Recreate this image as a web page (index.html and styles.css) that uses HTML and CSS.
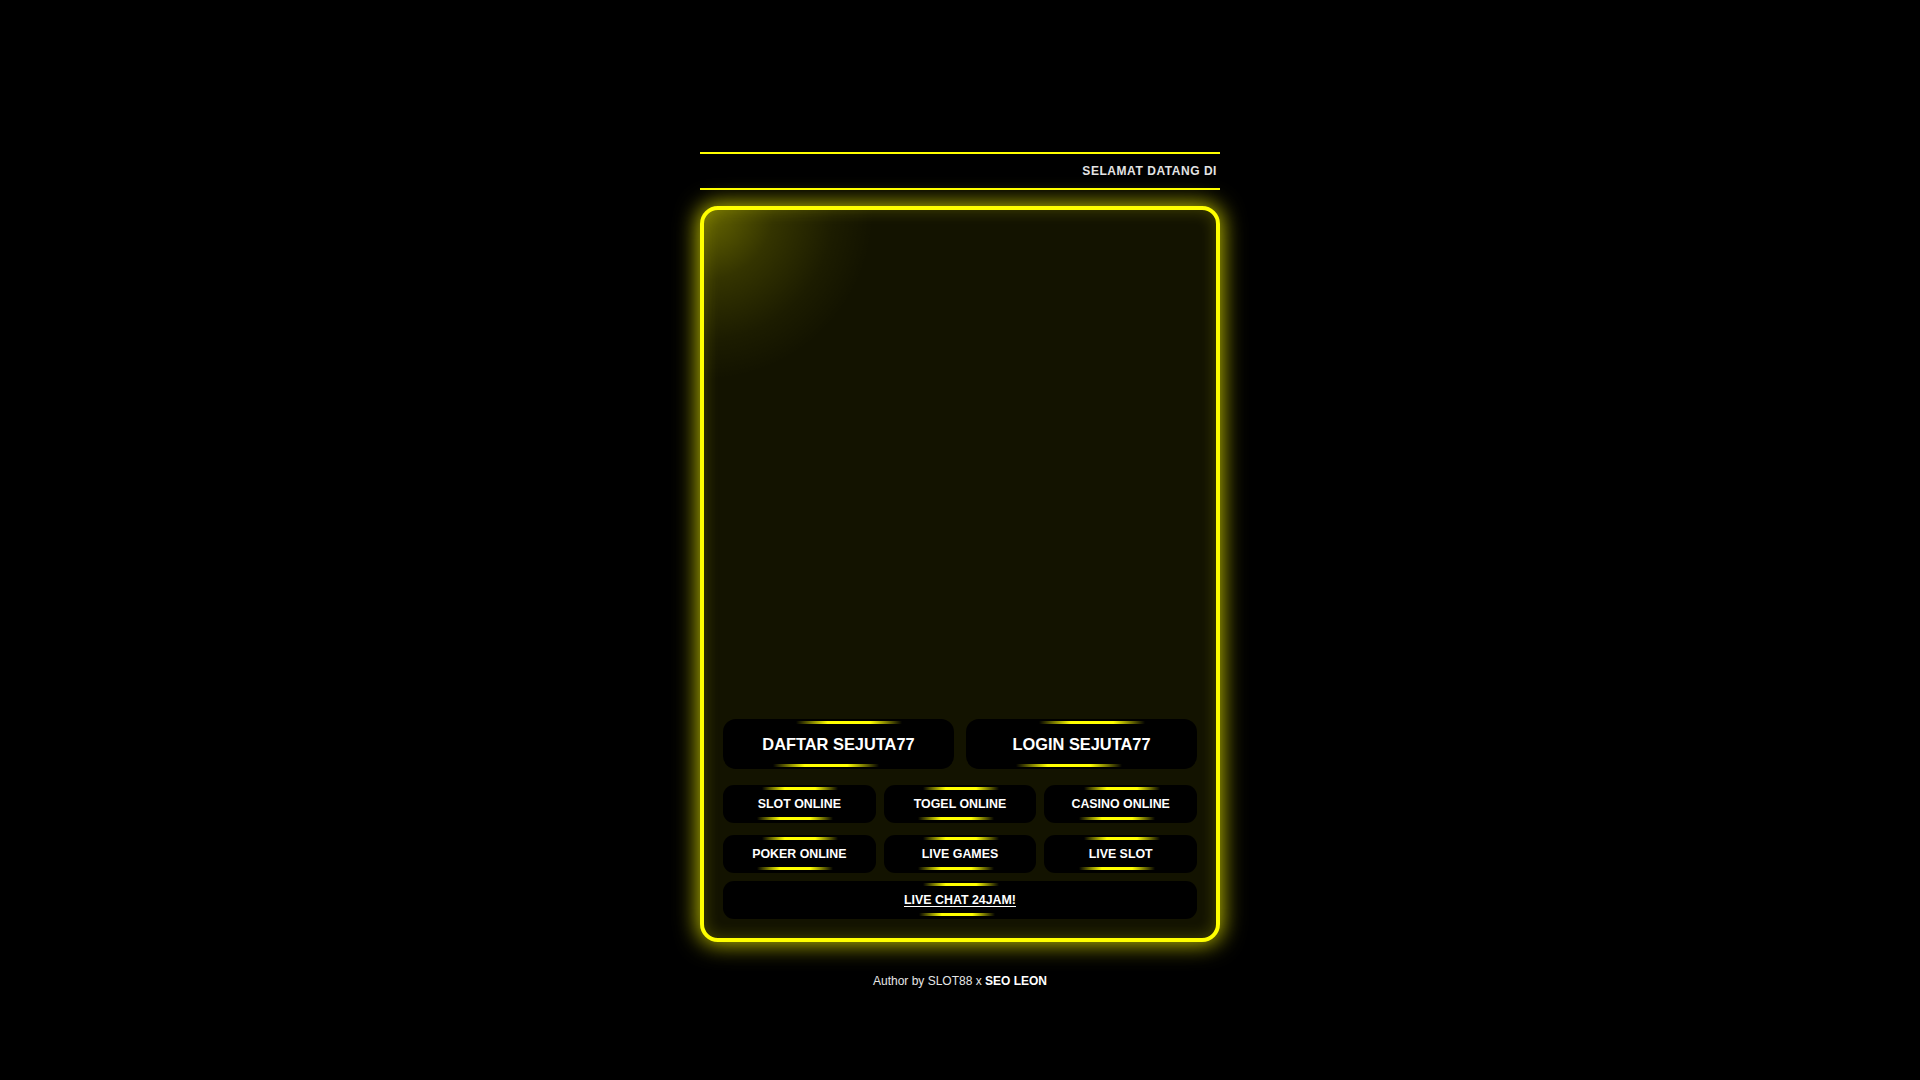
FILE: index.html
```html
<!DOCTYPE html>
<html lang="id">
<head>
<meta charset="utf-8">
<title>SEJUTA77</title>
<link rel="stylesheet" href="styles.css">
</head>
<body>
<div class="wrap">
  <div class="marquee"><span>SELAMAT DATANG DI</span></div>
  <div class="card">
    <div class="banner"></div>
    <div class="main-row">
      <a class="btn big" href="#">DAFTAR SEJUTA77</a>
      <a class="btn big" href="#">LOGIN SEJUTA77</a>
    </div>
    <div class="grid">
      <a class="btn small" href="#">SLOT ONLINE</a>
      <a class="btn small" href="#">TOGEL ONLINE</a>
      <a class="btn small" href="#">CASINO ONLINE</a>
      <a class="btn small" href="#">POKER ONLINE</a>
      <a class="btn small" href="#">LIVE GAMES</a>
      <a class="btn small" href="#">LIVE SLOT</a>
    </div>
    <a class="btn chat" href="#"><u>LIVE CHAT 24JAM!</u></a>
  </div>
  <p class="footer">Author by SLOT88 x <b>SEO LEON</b></p>
</div>
</body>
</html>
```

FILE: styles.css
```css
html, body {
  margin: 0;
  padding: 0;
  background: #000;
}
body {
  font-family: "Liberation Sans", Arial, sans-serif;
  color: #fff;
}
.wrap {
  width: 520px;
  margin: 152px auto 0;
}
.marquee {
  height: 34px;
  border-top: 2px solid #ffff00;
  border-bottom: 2px solid #ffff00;
  display: flex;
  align-items: center;
  justify-content: flex-end;
  padding-right: 3px;
  overflow: hidden;
  margin-bottom: 16px;
}
.marquee span {
  font-size: 12px;
  letter-spacing: 0.55px;
  font-weight: bold;
  color: #e4e4e4;
  text-shadow: 0 0 2px #000;
  white-space: nowrap;
}
.card {
  border: 4px solid #ffff00;
  border-radius: 18px;
  padding: 19px;
  background:
    radial-gradient(circle at 0 0, rgba(255, 255, 0, 0.36) 0px, rgba(255, 255, 0, 0.14) 70px, rgba(255, 255, 0, 0.04) 130px, rgba(255, 255, 0, 0) 170px),
    #131300;
  box-shadow: 0 0 22px 2px rgba(255, 255, 0, 0.75), inset 0 0 16px rgba(255, 255, 0, 0.22);
}
.banner {
  height: 490px;
}
.main-row {
  display: grid;
  grid-template-columns: 1fr 1fr;
  gap: 12px;
  margin-bottom: 16px;
}
.grid {
  display: grid;
  grid-template-columns: repeat(3, 1fr);
  column-gap: 8px;
  row-gap: 12px;
  margin-bottom: 8px;
}
.btn {
  position: relative;
  display: flex;
  align-items: center;
  justify-content: center;
  background: #000;
  color: #fff;
  text-decoration: none;
  font-weight: bold;
  font-size: 12.4px;
  height: 38px;
  border-radius: 11px;
}
.btn::before,
.btn::after {
  content: "";
  position: absolute;
  height: 3px;
  width: 76px;
  background: linear-gradient(90deg, rgba(255, 255, 0, 0) 0%, #ffff00 30%, #ffff00 70%, rgba(255, 255, 0, 0) 100%);
}
.btn::before {
  top: 2px;
  left: calc(50% - 37px);
}
.btn::after {
  bottom: 3px;
  left: calc(50% - 42px);
}
.btn.big {
  height: 50px;
  font-size: 16.4px;
  border-radius: 13px;
}
.btn.big::before {
  width: 106px;
  left: calc(50% - 43px);
}
.btn.big::after {
  width: 106px;
  bottom: 2px;
  left: calc(50% - 66px);
}
.btn.chat u {
  text-decoration: underline;
  text-underline-offset: 2px;
}
.btn.chat::before {
  left: calc(50% - 37px);
}
.btn.chat::after {
  left: calc(50% - 41px);
}
.footer {
  margin: 32px 0 0;
  text-align: center;
  font-size: 12px;
  line-height: 14px;
  color: #e6e6e6;
}
.footer b {
  color: #fff;
}
```
